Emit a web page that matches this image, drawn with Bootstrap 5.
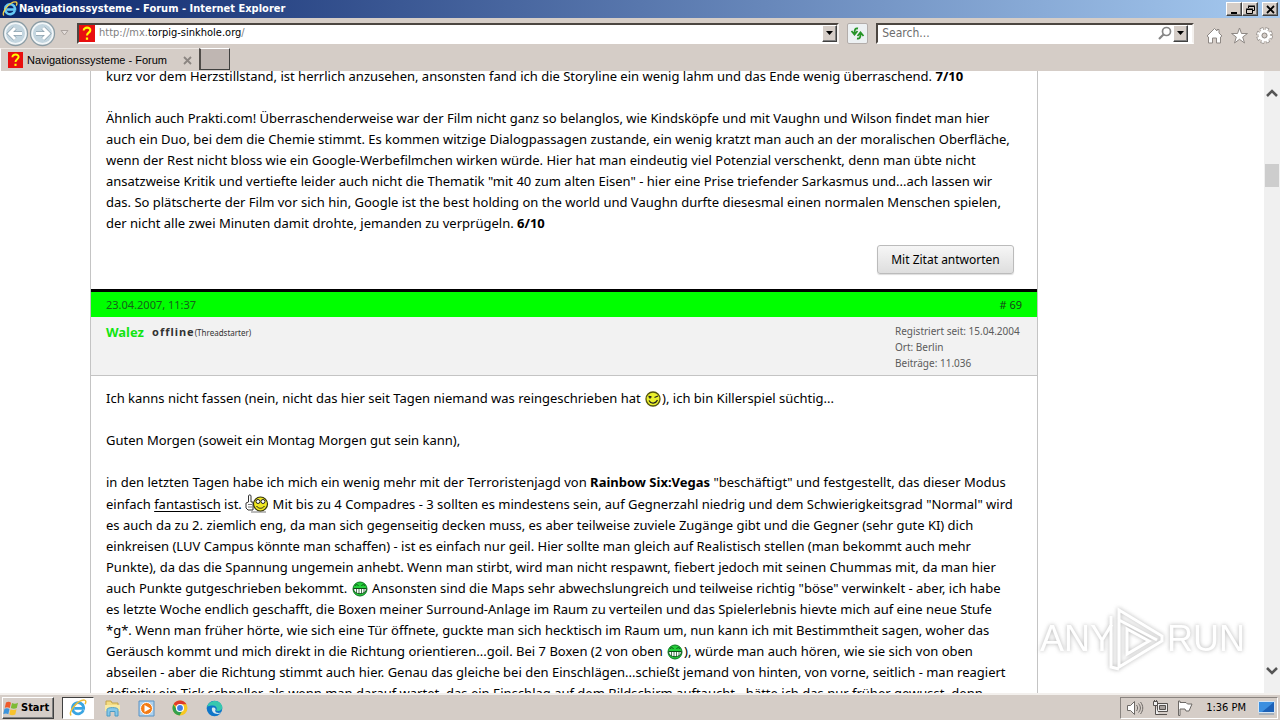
<!DOCTYPE html>
<html lang="de">
<head>
<meta charset="utf-8">
<meta name="viewport" content="width=device-width, initial-scale=1">
<title>Navigationssysteme - Forum</title>
<link href="https://cdn.jsdelivr.net/npm/bootstrap@5.3.0/dist/css/bootstrap.min.css" rel="stylesheet">
<style>
  :root { --face: #d5cdc7; --ui: "DejaVu Sans Condensed", "Liberation Sans", sans-serif; }
  body { font-family: "Noto Sans", "Open Sans", sans-serif; font-size: 13px; line-height: 21px; color: #000; background: #fff; }
  svg { display: block; flex: none; }
  button { padding: 0; border: 0; background: none; }
  .chrome { font-family: var(--ui); font-size: 11px; line-height: 14px; background: var(--face); }
  .titlebar { height: 18px; background: linear-gradient(90deg, #0a246a, #a6caf0); color: #fff; font-weight: bold; padding: 0 2px; gap: 1px; }
  .raised { background: var(--face); border: 1px solid; border-color: #fff #404040 #404040 #fff; box-shadow: inset -1px -1px #808080; }
  .winbtn { width: 16px; height: 14px; display: flex; align-items: center; justify-content: center; }
  .toolbar { height: 30px; padding-left: 2px; padding-right: 7px; }
  .field { height: 21px; background: #fff; border: 2px solid; border-color: #4c4641 #f4f1ee #fff #4c4641; }
  .search { width: 25%; margin-right: 12px; }
  .field input { border: 0; outline: 0; padding: 0; font-size: 12px; color: #6d6d6d; min-width: 0; }
  .field input::placeholder { color: #6d6d6d; opacity: 1; }
  .url { white-space: nowrap; color: #808080; text-decoration: none; }
  .url b { font-weight: normal; color: #000; }
  .drop { width: 15px; height: 17px; display: flex; align-items: center; justify-content: center; }
  .refresh { width: 21px; height: 21px; border: 1px solid #b3adaa; background: #edf1f3; border-radius: 2px; display: flex; align-items: center; justify-content: center; }
  .tabs { height: 23px; }
  .browser-tab { width: 199px; padding: 0 7px; height: 23px; border-left: 1px solid #fff; border-top: 1px solid #eee9e5; font-family: "Liberation Sans", sans-serif; }
  .newtab { width: 31px; height: 22px; background: #bfb6b2; border: 1px solid #40403f; border-top-color: #fff; border-left: 2px solid #504c49; }
  .page-view { min-height: 0; }
  .thread { width: 75%; margin-left: 90px; margin-top: -5px; border: solid #c4c4c4; border-width: 0 1px; }
  .post-text { padding: 0 15px; white-space: nowrap; }
  .post-text p { margin: 0 0 21px; }
  .post-text svg { display: inline-block; vertical-align: -4px; margin: 0 1px; }
  .post-text .tall { vertical-align: -6px; margin: 0; }
  .post-text u { text-underline-offset: 2px; }
  .quote-row { padding: 3px 23px 15px; }
  .quote { font-size: 12px; line-height: 27px; width: 137px; border: 1px solid #bbb; border-radius: 3px; background: linear-gradient(#f6f6f6, #dedede); box-shadow: 0 1px 1px #ddd; color: #000; }
  .post-bar { background: #0f0; border-top: 3px solid #000; height: 28px; padding: 0 15px; font-size: 11px; color: #17601b; }
  .post-bar a { color: #17431b; text-decoration: none; }
  .post-user { background: #f2f2f2; border-bottom: 1px solid #c4c4c4; height: 59px; padding: 6px 15px 0; }
  .user-name { color: #10e510; font-weight: bold; text-decoration: none; line-height: 18px; }
  .state { font-size: 11px; letter-spacing: 1px; color: #333; line-height: 18px; margin-left: 8px; }
  .starter { font-size: 8px; color: #333; line-height: 20px; }
  .stats { font-size: 10px; line-height: 16px; color: #5b5b5b; width: 127px; white-space: nowrap; }
  .scroller { width: 16px; background: #f0f0f0; padding: 17px 1px; }
  .thumb { height: 23px; background: #cdcdcd; margin-top: 66px; }
  .watermark { position: absolute; right: 28px; bottom: 22px; font: 36px "Liberation Sans", sans-serif; filter: drop-shadow(0 0 2px #999); opacity: .75; }
  .taskbar { height: 28px; border-top: 2px solid #f3f0ed; padding: 1px 2px 0; }
  .start { width: 52px; height: 22px; font-weight: bold; font-size: 11px; gap: 1px; color: #000; }
  .apps { gap: 2px; }
  .task { width: 32px; height: 22px; display: flex; align-items: center; justify-content: center; }
  .task-on { background: #fff; border: 1px solid; border-color: #404040 #fff #fff #404040; }
  .tray { height: 22px; border: 1px solid; border-color: #8a8480 #fff #fff #8a8480; padding: 0 2px 0 5px; }
</style>
</head>
<body class="d-flex flex-column vh-100 overflow-hidden">

<header class="chrome">
  <div class="titlebar d-flex align-items-center">
    <svg width="16" height="16" viewBox="0 0 16 16"><path d="M12.8 9.9A5 5 0 1 1 13 7.3v1.1H4.6" fill="none" stroke="#66c9f5" stroke-width="2.5"/><path d="M2 14.5C-1.5 12 8 .4 13.8 1c1.6.2 1.3 2 .5 3.6" fill="none" stroke="#f4cf45" stroke-width="1.3"/></svg>
    <span class="flex-grow-1 text-nowrap">Navigationssysteme - Forum - Internet Explorer</span>
    <div class="d-flex">
      <button class="raised winbtn" aria-label="Minimieren"><svg width="9" height="9"><path d="M1 7h6v2H1z"/></svg></button>
      <button class="raised winbtn" aria-label="Wiederherstellen"><svg width="9" height="9" fill="none" stroke="#000"><path d="M2.5 3V1.5h6v4H7M2 1h7M.5 4.5h6v4h-6zM0 4h7"/></svg></button>
      <button class="raised winbtn ms-1" aria-label="Schließen"><svg width="9" height="9"><path d="M1 1l7 7M8 1L1 8" stroke="#000" stroke-width="1.8"/></svg></button>
    </div>
  </div>

  <div class="toolbar d-flex align-items-center">
    <div class="d-flex me-1">
      <button aria-label="Zurück"><svg width="27" height="27" viewBox="0 0 27 27"><circle cx="13.5" cy="13.5" r="12" fill="#f2f6f8" stroke="#8b9ca4" stroke-width="1.3"/><circle cx="13.5" cy="13.5" r="9.5" fill="#c3d5df"/><path d="M20 13.5H8M13 8l-5.500 5.500L13 19" fill="none" stroke="#8fa3b0" stroke-width="4.500"/><path d="M20 13.5H8M13 8l-5.500 5.500L13 19" fill="none" stroke="#fff" stroke-width="3"/></svg></button>
      <button aria-label="Vorwärts"><svg width="27" height="27" viewBox="0 0 27 27"><circle cx="13.5" cy="13.5" r="12" fill="#f2f6f8" stroke="#8b9ca4" stroke-width="1.3"/><circle cx="13.5" cy="13.5" r="9.5" fill="#c3d5df"/><path d="M7 13.5h12M14 8l5.500 5.500L14 19" fill="none" stroke="#8fa3b0" stroke-width="4.500"/><path d="M7 13.5h12M14 8l5.500 5.500L14 19" fill="none" stroke="#fff" stroke-width="3"/></svg></button>
    </div>
    <button class="me-2" aria-label="Verlauf"><svg width="9" height="6"><path d="M1 .5h7L4.500 5z" fill="#e4dedb" stroke="#aaa29e"/></svg></button>
    <div class="field d-flex align-items-center flex-grow-1 me-2">
      <svg class="me-1" width="16" height="17" viewBox="0 0 17 17" preserveAspectRatio="none"><path fill="#e80f0f" d="M0 0h17v17H0z"/><path d="M5 5.500C5 1.500 12.500 2 12 5.500c-.3 2-3.500 2.500-3.500 5" fill="none" stroke="#ff0" stroke-width="2.200"/><path fill="#ff0" d="M7.300 12.500h2.400v2.300H7.300z"/></svg>
      <a class="url flex-grow-1" href="#">http://mx.<b>torpig-sinkhole.org</b>/</a>
      <button class="raised drop" aria-label="Adressen"><svg width="7" height="4"><path d="M0 0h7L3.500 4z"/></svg></button>
    </div>
    <button class="refresh me-2" aria-label="Aktualisieren"><svg width="15" height="15" fill="none" stroke="#269427" stroke-width="1.800"><path d="M8 2.500C5.500 2 4.500 3 4.500 7M1.500 5l3 3.500L7.500 5M7 12.500c2.500.5 3.500-.5 3.500-4.500M7.500 10l3-3.500 3 3.500"/></svg></button>
    <div class="field search d-flex align-items-center">
      <input class="flex-grow-1 ms-1" type="text" placeholder="Search..." aria-label="Search">
      <svg width="15" height="15" fill="none" stroke="#868686"><circle cx="8.500" cy="5.500" r="4" stroke-width="1.700"/><path d="M5.500 8.500L1 13" stroke-width="2.200"/></svg>
      <button class="raised drop me-1" aria-label="Suchanbieter"><svg width="7" height="4"><path d="M0 0h7L3.500 4z"/></svg></button>
    </div>
    <div class="d-flex gap-2 mt-1">
      <button aria-label="Start"><svg width="17" height="17" viewBox="0 0 17 17" fill="#fff" stroke="#8e8884"><path d="M1 9l7.500-7.500L11 4V2.500h2V6l3 3-1.500 1v6h-4v-5h-4v5h-4v-6z"/></svg></button>
      <button aria-label="Favoriten"><svg width="17" height="17" viewBox="0 0 17 17" fill="#fff" stroke="#8e8884"><path d="M8.500 1l2 5.500h6L11.700 10l1.800 6-5-3.700-5 3.700 1.800-6L.5 6.500h6z"/></svg></button>
      <button aria-label="Extras"><svg width="17" height="17" viewBox="0 0 17 17"><circle cx="8.500" cy="8.500" r="6.500" fill="none" stroke="#8e8884" stroke-width="3.600" stroke-dasharray="3.300 1.805"/><circle cx="8.500" cy="8.500" r="6.300" fill="none" stroke="#fff" stroke-width="2.600" stroke-dasharray="2.300 2.648" stroke-dashoffset="-.4"/><circle cx="8.500" cy="8.500" r="4.300" fill="var(--face)" stroke="#fff" stroke-width="3"/><circle cx="8.500" cy="8.500" r="2.500" fill="none" stroke="#8e8884"/></svg></button>
    </div>
  </div>

  <div class="tabs d-flex">
    <div class="browser-tab d-flex align-items-center">
      <svg class="me-1" width="15" height="16" viewBox="0 0 17 17" preserveAspectRatio="none"><path fill="#e80f0f" d="M0 0h17v17H0z"/><path d="M5 5.500C5 1.500 12.500 2 12 5.500c-.3 2-3.500 2.500-3.500 5" fill="none" stroke="#ff0" stroke-width="2.200"/><path fill="#ff0" d="M7.300 12.500h2.400v2.300H7.300z"/></svg>
      <span class="flex-grow-1 text-nowrap">Navigationssysteme - Forum</span>
      <button aria-label="Tab schließen"><svg width="9" height="9"><path d="M1 1l7 7M8 1L1 8" stroke="#8b8581" stroke-width="1.800"/></svg></button>
    </div>
    <button class="newtab" aria-label="Neuer Tab"></button>
  </div>
</header>

<main class="page-view d-flex flex-grow-1 overflow-hidden position-relative">
  <div class="flex-grow-1">
    <div class="thread">
      <article>
        <div class="post-text">
          <p>kurz vor dem Herzstillstand, ist herrlich anzusehen, ansonsten fand ich die Storyline ein wenig lahm und das Ende wenig überraschend. <b>7/10</b></p>
          <p class="mb-2">Ähnlich auch Prakti.com! Überraschenderweise war der Film nicht ganz so belanglos, wie Kindsköpfe und mit Vaughn und Wilson findet man hier<br>
          auch ein Duo, bei dem die Chemie stimmt. Es kommen witzige Dialogpassagen zustande, ein wenig kratzt man auch an der moralischen Oberfläche,<br>
          wenn der Rest nicht bloss wie ein Google-Werbefilmchen wirken würde. Hier hat man eindeutig viel Potenzial verschenkt, denn man übte nicht<br>
          ansatzweise Kritik und vertiefte leider auch nicht die Thematik "mit 40 zum alten Eisen" - hier eine Prise triefender Sarkasmus und...ach lassen wir<br>
          das. So plätscherte der Film vor sich hin, Google ist the best holding on the world und Vaughn durfte diesesmal einen normalen Menschen spielen,<br>
          der nicht alle zwei Minuten damit drohte, jemanden zu verprügeln. <b>6/10</b></p>
        </div>
        <div class="quote-row d-flex justify-content-end"><button class="quote">Mit Zitat antworten</button></div>
      </article>

      <article>
        <div class="post-bar d-flex justify-content-between align-items-center"><span>23.04.2007, 11:37</span><a href="#"># 69</a></div>
        <div class="post-user d-flex justify-content-between">
          <div class="d-flex align-items-start"><a class="user-name" href="#">Walez</a><b class="state">offline</b><span class="starter">(Threadstarter)</span></div>
          <div class="stats">Registriert seit: 15.04.2004<br>Ort: Berlin<br>Beiträge: 11.036</div>
        </div>
        <div class="post-text pt-2 mt-1">
          <p>Ich kanns nicht fassen (nein, nicht das hier seit Tagen niemand was reingeschrieben hat <svg width="16" height="16" viewBox="0 0 16 16"><circle cx="8" cy="8" r="7" fill="#eaf02c" stroke="#55550c" stroke-width="1.300"/><path d="M3.500 5.500l3 .5M9.500 6.500l3.500-1.500M4 9.500c2 4 7 3 8.500-.5" fill="none" stroke="#222" stroke-width="1.300"/><path d="M5 5v2.500" stroke="#222" stroke-width="1.500"/></svg>), ich bin Killerspiel süchtig...</p>
          <p>Guten Morgen (soweit ein Montag Morgen gut sein kann),</p>
          <p>in den letzten Tagen habe ich mich ein wenig mehr mit der Terroristenjagd von <b>Rainbow Six:Vegas</b> "beschäftigt" und festgestellt, das dieser Modus<br>
          einfach <u>fantastisch</u> ist. <svg class="tall" width="24" height="22" viewBox="0 0 24 22"><path d="M6 19h15" stroke="#bbb" stroke-width="2"/><circle cx="15.500" cy="11" r="7" fill="#f1e820" stroke="#33330a" stroke-width="1.200"/><circle cx="13" cy="8.500" r="2" fill="#fff" stroke="#222"/><circle cx="18" cy="8.500" r="2" fill="#fff" stroke="#222"/><path d="M11.500 13c2 3 6 3 8 0" fill="none" stroke="#222"/><path d="M3.500 3c0-1.500 2.500-1.500 2.500 0v6h2v8H3L1 15v-5l2.500-1z" fill="#fff" stroke="#333"/><path d="M3 11.500h4M3 14h4" stroke="#777"/></svg> Mit bis zu 4 Compadres - 3 sollten es mindestens sein, auf Gegnerzahl niedrig und dem Schwierigkeitsgrad "Normal" wird<br>
          es auch da zu 2. ziemlich eng, da man sich gegenseitig decken muss, es aber teilweise zuviele Zugänge gibt und die Gegner (sehr gute KI) dich<br>
          einkreisen (LUV Campus könnte man schaffen) - ist es einfach nur geil. Hier sollte man gleich auf Realistisch stellen (man bekommt auch mehr<br>
          Punkte), da das die Spannung ungemein anhebt. Wenn man stirbt, wird man nicht respawnt, fiebert jedoch mit seinen Chummas mit, da man hier<br>
          auch Punkte gutgeschrieben bekommt. <svg width="16" height="16" viewBox="0 0 16 16"><circle cx="8" cy="8" r="7" fill="#25cf3b" stroke="#0c7820"/><path d="M3 5c1-2 3-1.500 3.500 0M9.500 5c.5-1.500 2.500-2 3.500 0" fill="none" stroke="#084e12"/><path d="M1.500 7.500h13c0 7-13 7-13 0z" fill="#fff" stroke="#0b4e15"/><path d="M4.500 8v4M7 8v5M9.500 8v5M12 8v4" stroke="#275c2d" stroke-width=".8"/></svg> Ansonsten sind die Maps sehr abwechslungreich und teilweise richtig "böse" verwinkelt - aber, ich habe<br>
          es letzte Woche endlich geschafft, die Boxen meiner Surround-Anlage im Raum zu verteilen und das Spielerlebnis hievte mich auf eine neue Stufe<br>
          *g*. Wenn man früher hörte, wie sich eine Tür öffnete, guckte man sich hecktisch im Raum um, nun kann ich mit Bestimmtheit sagen, woher das<br>
          Geräusch kommt und mich direkt in die Richtung orientieren...goil. Bei 7 Boxen (2 von oben <svg width="16" height="16" viewBox="0 0 16 16"><circle cx="8" cy="8" r="7" fill="#25cf3b" stroke="#0c7820"/><path d="M3 5c1-2 3-1.500 3.500 0M9.500 5c.5-1.500 2.500-2 3.500 0" fill="none" stroke="#084e12"/><path d="M1.500 7.500h13c0 7-13 7-13 0z" fill="#fff" stroke="#0b4e15"/><path d="M4.500 8v4M7 8v5M9.500 8v5M12 8v4" stroke="#275c2d" stroke-width=".8"/></svg>), würde man auch hören, wie sie sich von oben<br>
          abseilen - aber die Richtung stimmt auch hier. Genau das gleiche bei den Einschlägen...schießt jemand von hinten, von vorne, seitlich - man reagiert<br>
          definitiv ein Tick schneller, als wenn man darauf wartet, das ein Einschlag auf dem Bildschirm auftaucht - hätte ich das nur früher gewusst, denn</p>
        </div>
      </article>
    </div>
  </div>

  <div class="scroller d-flex flex-column">
    <svg width="14" height="10"><path d="M2 8l5-5 5 5" fill="none" stroke="#555" stroke-width="2.500"/></svg>
    <div class="thumb"></div>
    <svg class="mt-auto" width="14" height="10"><path d="M2 2l5 5 5-5" fill="none" stroke="#555" stroke-width="2.500"/></svg>
  </div>

  <div class="watermark" aria-hidden="true">
    <svg width="214" height="66" viewBox="0 0 214 66"><g fill="#fff"><text x="2" y="46">ANY</text><text x="129" y="46">RUN</text></g><path d="M81 5l43 26v5L81 62zM73 11v51l8 2M81 15l38 20M89 24v25l22-13z" fill="none" stroke="#fff" stroke-width="3"/></svg>
  </div>
</main>

<footer class="chrome taskbar d-flex align-items-center">
  <button class="start raised d-flex align-items-center me-2"><svg width="17" height="17" viewBox="0 0 17 17"><path d="M3 2.500c2-1 3.500-.8 5 .2L6.800 8C5 7 3.500 7 1.800 7.700z" fill="#ef5b2b"/><path d="M9 3c2 1 4 .8 6-.2L13.800 8c-2 1-4 1-6 .1z" fill="#7dbb35"/><path d="M1.500 8.700C3.200 8 5 8 6.500 9l-1.200 5.200c-1.500-1-3-1-5-.2z" fill="#3d94dc"/><path d="M7.500 9.300c2 1 4 .8 6-.1l-1.200 5.200c-2 1-4 1-6 .1z" fill="#f8c22d"/></svg>Start</button>
  <div class="apps d-flex">
    <button class="task task-on" aria-label="Internet Explorer"><svg width="18" height="18" viewBox="0 0 16 16"><path d="M12.800 9.900A5 5 0 1 1 13 7.300v1.100H4.600" fill="none" stroke="#3aa5e2" stroke-width="2.500"/><path d="M2 14.500C-1.500 12 8 .4 13.800 1c1.600.2 1.300 2 .5 3.600" fill="none" stroke="#eebd37" stroke-width="1.300"/></svg></button>
    <button class="task" aria-label="Explorer"><svg width="17" height="17" viewBox="0 0 17 17"><path d="M2 1h5l1 2h6v6H2z" fill="#f4dc81" stroke="#c2a248"/><path d="M1 5h15v6H1z" fill="#f9eaa4"/><path d="M3 16V9.500C3 7 14 7 14 9.500V16h-3v-4.500H6V16z" fill="#85c8ea" stroke="#4a9cc5"/></svg></button>
    <button class="task" aria-label="Media Player"><svg width="17" height="17" viewBox="0 0 17 17"><path d="M1 1h15v15H1z" fill="#acd1ee" stroke="#5b93c4"/><circle cx="8.500" cy="8.500" r="6" fill="#f37c16" stroke="#fff"/><path d="M6.500 5l6 3.500-6 3.500z" fill="#fff"/></svg></button>
    <button class="task" aria-label="Chrome"><svg width="16" height="16" viewBox="0 0 16 16"><circle cx="8" cy="8" r="7.500" fill="#f7c822"/><path d="M8 8L1.500 4.200A7.500 7.500 0 0 1 14.500 4.300H8z" fill="#df3a2c"/><path d="M1.500 4.200A7.500 7.500 0 0 0 7.600 15.500L11 9.500 5 10z" fill="#32a04e"/><circle cx="8" cy="8" r="3.500" fill="#3f7ee3" stroke="#fff" stroke-width="1.200"/></svg></button>
    <button class="task" aria-label="Edge"><svg width="17" height="17" viewBox="0 0 17 17"><circle cx="8.500" cy="8.500" r="7.800" fill="#0e75c8"/><path d="M1 7C3-1 15-1 16.300 7c.3 4-4.300 4.500-6.300 3.500 2-2 0-5-3-5S2 6 1 7z" fill="#37c8ae"/><path d="M6 8c-1 4 3 7 8 5.500l1.200-1c-2 .8-6 .8-6-2 1.500-1.500-1-4-3.200-2.500z" fill="#d5e8ef"/></svg></button>
  </div>
  <div class="tray d-flex align-items-center ms-auto gap-2">
    <svg width="18" height="16" fill="none" stroke="#6c6865"><path d="M1.500 5.500h3l4-4v13l-4-4h-3z" fill="#fff"/><path d="M10.500 5c1.500 2 1.500 4 0 6M12.500 3.500c2.500 3 2.500 6 0 9M14.500 2c3 4 3 8 0 12"/></svg>
    <svg width="17" height="16" fill="#eee" stroke="#55514e"><path d="M5.500 3.500h10v8h-10z"/><path d="M7.500 5.500h6v4h-6z" fill="#a6a09c"/><path d="M7 14.500h8M1.500 1.500h4v4h-4zM3.500 6v8.500H7M2.500 0v2M4.500 0v2"/></svg>
    <svg width="17" height="16" fill="#fff" stroke="#6c6865"><path d="M1.500 1v14.500h1.500V9h5l1 2h3l3-7h-4.500L9 2.500H3V1z"/></svg>
    <span class="ms-1 text-nowrap">1:36 PM</span>
    <svg class="ms-1" width="17" height="14"><path d="M.5.5h16v11H.5z" fill="#1d61b7" stroke="#d7e5f2"/><path d="M1 1h15L4 11H1z" fill="#3b8fe0"/><path d="M1 13h15" stroke="#7a96b1"/></svg>
  </div>
</footer>

<script src="https://cdn.jsdelivr.net/npm/bootstrap@5.3.0/dist/js/bootstrap.bundle.min.js"></script>
</body>
</html>
